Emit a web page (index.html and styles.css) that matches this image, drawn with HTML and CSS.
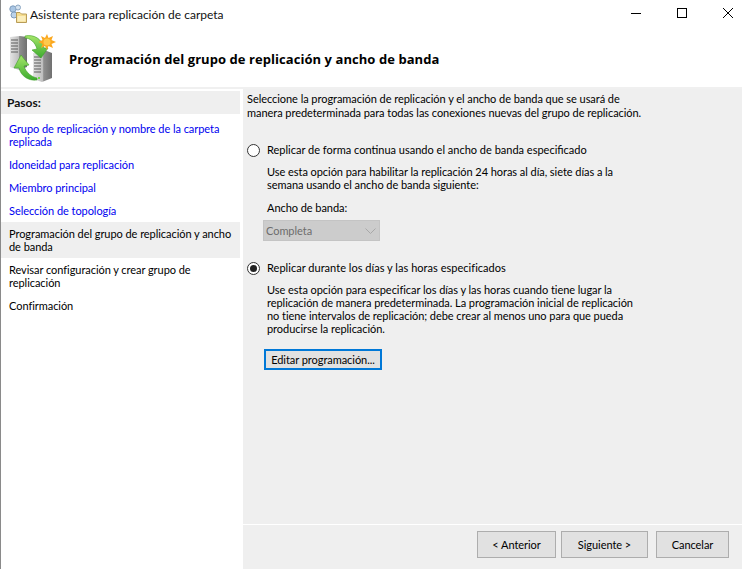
FILE: index.html
```html
<!DOCTYPE html>
<html lang="es">
<head>
<meta charset="utf-8">
<title>Asistente para replicación de carpeta</title>
<link rel="stylesheet" href="styles.css">
</head>
<body>
<div class="window">
  <div class="titlebar">
    <svg class="title-icon" width="18" height="19" viewBox="0 0 18 19">
      <circle cx="4" cy="5" r="3.2" fill="#a9c6e4" stroke="#7f9dbd"/>
      <circle cx="9" cy="3.5" r="2.5" fill="#d6e3ef" stroke="#8ba6c2"/>
      <circle cx="5" cy="11" r="3" fill="#bcd3ea" stroke="#7f9dbd"/>
      <path d="M7.5 8.5 H11 L12.5 10 H17.5 V18.5 H7.5 Z" fill="#f5dc8e" stroke="#b89c58"/>
      <path d="M8.5 12 H16.5 V17.5 H8.5 Z" fill="#fbeebd"/>
    </svg>
    <span class="title-text">Asistente para replicación de carpeta</span>
    <div class="controls">
      <svg class="ctl" width="12" height="12" viewBox="0 0 12 12"><path d="M1 6.5 H11" stroke="#000" stroke-width="1"/></svg>
      <svg class="ctl" width="12" height="12" viewBox="0 0 12 12"><rect x="1.5" y="1.5" width="9" height="9" fill="none" stroke="#000"/></svg>
      <svg class="ctl" width="12" height="12" viewBox="0 0 12 12"><path d="M1 1 L11 11 M11 1 L1 11" stroke="#000" stroke-width="1"/></svg>
    </div>
  </div>
  <header class="banner">
    <svg class="banner-icon" width="47" height="49" viewBox="0 0 47 49">
      <defs>
        <linearGradient id="srv" x1="0" x2="1" y1="0" y2="0"><stop offset="0" stop-color="#e4e4e4"/><stop offset="0.52" stop-color="#bdbdbd"/><stop offset="0.56" stop-color="#8f8f8f"/><stop offset="1" stop-color="#707070"/></linearGradient>
        <linearGradient id="grn" x1="0" x2="0" y1="0" y2="1"><stop offset="0" stop-color="#a6e66a"/><stop offset="1" stop-color="#3cab2e"/></linearGradient>
      </defs>
      <path d="M1 4 L11 3 L18 4 V34 L10 37 L1 34 Z" fill="url(#srv)"/>
      <path d="M2 7 H9 M2 10 H9 M2 13 H9 M2 16 H9 M2 19 H9" stroke="#5a5a5a"/>
      <path d="M24 20 L35 17 L43 20 V45 L33 49 L24 46 Z" fill="url(#srv)"/>
      <path d="M25 24 H32 M25 27 H32 M25 30 H32 M25 33 H32 M25 36 H32 M25 39 H32" stroke="#5a5a5a"/>
      <rect x="29" y="44" width="2" height="2" fill="#6fdc4a"/>
      <path d="M16 3 C25 1 33 6 35 15 L39 15 L32 25 L23 17 L28 16 C26 9 21 5 16 5 Z" fill="url(#grn)" stroke="#3f9e2c" stroke-width="0.6"/>
      <path d="M28 47 C19 48 12 43 10 35 L5 35 L12 22 L20 32 L15 33 C17 40 23 44 28 45 Z" fill="url(#grn)" stroke="#3f9e2c" stroke-width="0.6"/>
      <path d="M38 1 L39.5 5 L44 3 L42.5 7 L47 9 L42.5 11 L44 15 L39.5 13 L38 17 L36 13 L32 15 L33.5 11 L29.5 9 L33.5 7 L32 3 L36 5 Z" fill="#fba81f"/>
      <circle cx="38" cy="9" r="3.5" fill="#ffc94d"/>
    </svg>
    <h1 class="banner-title">Programación del grupo de replicación y ancho de banda</h1>
  </header>
  <div class="main">
    <nav class="steps">
      <div class="steps-head">Pasos:</div>
      <ul class="step-list">
        <li class="step link">Grupo de replicación y nombre de la carpeta<br>replicada</li>
        <li class="step link">Idoneidad para replicación</li>
        <li class="step link">Miembro principal</li>
        <li class="step link">Selección de topología</li>
        <li class="step current">Programación del grupo de replicación y ancho<br>de banda</li>
        <li class="step">Revisar configuración y crear grupo de<br>replicación</li>
        <li class="step">Confirmación</li>
      </ul>
    </nav>
    <section class="content">
      <div class="panel">
        <p class="intro">Seleccione la programación de replicación y el ancho de banda que se usará de<br>manera predeterminada para todas las conexiones nuevas del grupo de replicación.</p>
        <label class="radio radio-first"><span class="dot"></span>Replicar de forma continua usando el ancho de banda especificado</label>
        <p class="desc desc-one">Use esta opción para habilitar la replicación 24 horas al día, siete días a la<br>semana usando el ancho de banda siguiente:</p>
        <div class="field-label">Ancho de banda:</div>
        <div class="select"><span>Completa</span>
          <svg width="11" height="6" viewBox="0 0 11 6"><path d="M0.5 0.5 L5.5 5.5 L10.5 0.5" fill="none" stroke="#a8a8a8"/></svg>
        </div>
        <label class="radio radio-second"><span class="dot on"></span>Replicar durante los días y las horas especificados</label>
        <p class="desc desc-two">Use esta opción para especificar los días y las horas cuando tiene lugar la<br>replicación de manera predeterminada. La programación inicial de replicación<br>no tiene intervalos de replicación; debe crear al menos uno para que pueda<br>producirse la replicación.</p>
        <button class="btn btn-edit">Editar programación...</button>
      </div>
      <footer class="actions">
        <button class="btn btn-prev">&lt; Anterior</button>
        <button class="btn btn-next">Siguiente &gt;</button>
        <button class="btn btn-cancel">Cancelar</button>
      </footer>
    </section>
  </div>
</div>
</body>
</html>
```
FILE: styles.css
```css
* { box-sizing: border-box; }
html, body { margin: 0; padding: 0; }
body { width: 742px; height: 569px; overflow: hidden; background: #fff; font-family: Lato, Roboto, sans-serif; font-size: 11px; letter-spacing: -0.05px; color: #000; }
.window { width: 742px; height: 569px; display: flex; flex-direction: column; border-left: 1px solid #8a8a8a; }
.titlebar { height: 30px; display: flex; align-items: center; padding-left: 8px; flex: none; }
.title-icon { flex: none; margin-right: 3px; margin-top: -3px; }
.title-text { font-size: 12px; letter-spacing: 0; color: #111; margin-top: -2px; }
.controls { margin-left: auto; display: flex; margin-top: -4px; }
.ctl { display: block; margin-left: 34px; }
.ctl:last-child { margin-right: 8px; }
.banner { height: 59px; flex: none; display: flex; align-items: center; border-bottom: 2px solid #f0f0f0; padding-left: 8px; }
.banner-icon { flex: none; margin-right: 13px; margin-top: -2px; }
.banner-title { margin: 0; font-family: "Open Sans", sans-serif; font-size: 13px; letter-spacing: 0.06px; font-weight: 700; color: #000; margin-top: 1px; }
.main { flex: 1; display: flex; min-height: 0; background: #efefef; }
.steps { width: 239px; flex: none; background: #fff; padding-top: 2px; }
.steps-head { height: 23px; background: #efefef; font-size: 12px; letter-spacing: 0; font-weight: 700; padding: 4px 7px 0 6px; color: #111; line-height: 16px; }
.step-list { list-style: none; margin: 0; padding: 3px 0 0; }
.step { padding: 5px 8px; line-height: 13px; white-space: nowrap; }
.link { color: #0000f0; }
.current { background: #efefef; }
.content { flex: 1; display: flex; flex-direction: column; border-left: 3px solid #fff; min-width: 0; }
.panel { flex: 1; padding: 3px 0 0 4px; }
.intro { margin: 0; line-height: 14px; white-space: nowrap; }
.radio { display: flex; align-items: center; line-height: 14px; }
.radio-first { margin-top: 23px; letter-spacing: 0; }
.radio-second { margin-top: 20px; letter-spacing: 0.03px; }
.dot { width: 13px; height: 13px; border: 1px solid #333; border-radius: 50%; background: #fff; margin-right: 7px; position: relative; flex: none; }
.dot.on::after { content: ""; position: absolute; left: 2px; top: 2px; width: 7px; height: 7px; border-radius: 50%; background: #222; }
.desc { margin: 0; margin-left: 20px; line-height: 13px; white-space: nowrap; }
.desc-one { margin-top: 8px; }
.desc-two { margin-top: 8px; }
.field-label { margin: 10px 0 0 20px; line-height: 14px; }
.select { margin: 5px 0 0 16px; width: 117px; height: 21px; background: #ccc; border: 1px solid #c4c4c4; display: flex; align-items: center; justify-content: space-between; padding: 0 3px 0 2px; color: #6d6d6d; }
.btn { font: inherit; letter-spacing: inherit; color: #000; background: #e1e1e1; border: 1px solid #adadad; padding: 0; white-space: nowrap; }
.btn-edit { display: block; margin: 14px 0 0 17px; width: 118px; height: 21px; border: 2px solid #0078d7; }
.actions { height: 45px; flex: none; border-top: 1px solid #fff; display: flex; padding: 6px 0 0 234px; }
.actions .btn { height: 27px; }
.btn-prev { width: 79px; margin-right: 5px; }
.btn-next { width: 87px; margin-right: 8px; }
.btn-cancel { width: 73px; }
```
